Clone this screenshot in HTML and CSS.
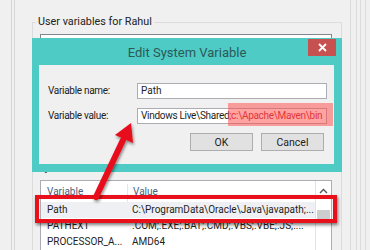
FILE: index.html
```html
<!DOCTYPE html>
<html lang="en">

<head>
    <meta charset="UTF-8">
    <title>Edit System Variable</title>
    <link rel="stylesheet" href="styles.css">
</head>

<body>
    <div class="frame">
        <div class="rail-left"></div>
        <div class="window">
            <fieldset class="group">
                <legend>User variables for Rahul</legend>
                <div class="list list-user"></div>
            </fieldset>
            <fieldset class="group group-sys">
                <legend>System variables</legend>
                <div class="list list-sys">
                    <div class="rows">
                        <div class="row head">
                            <span class="c1">Variable</span>
                            <span class="c2">Value</span>
                        </div>
                        <div class="row sel">
                            <span class="c1">Path</span>
                            <span class="c2">C:\ProgramData\Oracle\Java\javapath;...</span>
                        </div>
                        <div class="row">
                            <span class="c1">PATHEXT</span>
                            <span class="c2">.COM;.EXE;.BAT;.CMD;.VBS;.VBE;.JS;....</span>
                        </div>
                        <div class="row">
                            <span class="c1">PROCESSOR_A...</span>
                            <span class="c2">AMD64</span>
                        </div>
                    </div>
                    <div class="scroll">
                        <svg class="up" width="9" height="6" viewBox="0 0 9 6">
                            <path d="M1 5 L4.5 1.5 L8 5" fill="none" stroke="#555" stroke-width="1.4" />
                        </svg>
                        <div class="thumb"></div>
                    </div>
                </div>
            </fieldset>
        </div>
        <div class="rail-right"></div>
    </div>

    <!-- the dialog and the markup on top of the window -->
    <div class="dialog">
        <div class="titlebar">
            <span class="title">Edit System Variable</span>
            <button class="close">
                <svg width="9" height="9" viewBox="0 0 9 9">
                    <path d="M1 1 L8 8 M8 1 L1 8" stroke="#fff" stroke-width="1.8" />
                </svg>
            </button>
        </div>
        <div class="panel">
            <div class="field">
                <label>Variable name:</label>
                <div class="inpt">Path</div>
            </div>
            <div class="field">
                <label>Variable value:</label>
                <div class="inpt inpt-value">
                    <span class="txt">Vindows Live\Shared<span class="hl-text">;c:\Apache\Maven\bin</span></span>
                    <div class="hl"></div>
                </div>
            </div>
            <div class="buttons">
                <button class="but">OK</button>
                <button class="but">Cancel</button>
            </div>
        </div>
    </div>

    <div class="mark"></div>

    <svg class="arrow" width="370" height="250" viewBox="0 0 370 250">
        <defs>
            <filter id="shadow" x="-20%" y="-20%" width="140%" height="140%">
                <feDropShadow dx="1" dy="2" stdDeviation="1.5" flood-color="#000" flood-opacity="0.45" />
            </filter>
        </defs>
        <g filter="url(#shadow)">
            <line x1="96" y1="197" x2="123" y2="140" stroke="#e8101a" stroke-width="6" stroke-linecap="round" />
            <polygon points="131,123 133,143 115,135" fill="#e8101a" />
        </g>
    </svg>
</body>

</html>
```

FILE: styles.css
```css
body {
    margin: 0;
    width: 370px;
    height: 250px;
    overflow: hidden;
    position: relative;
    background-color: #f0f0f0;
    font-family: Roboto, 'Noto Sans', sans-serif;
    font-size: 10px;
    color: #1e1e1e;
}

.frame {
    display: flex;
    height: 250px;
    overflow: hidden;
}

.rail-left {
    width: 32px;
    flex-shrink: 0;
    background: linear-gradient(to right, transparent 11px, #d6d6d6 11px 12px, transparent 12px 14px, #d6d6d6 14px 15px, transparent 15px);
}

.rail-right {
    width: 28px;
    flex-shrink: 0;
    background: linear-gradient(to right, transparent 8px, #dcdcdc 8px 9px, transparent 9px 14px, #dcdcdc 14px 15px, transparent 15px 18px, #dcdcdc 18px 19px, transparent 19px 23px, #dcdcdc 23px 24px, transparent 24px);
}

.window {
    flex: 1;
    min-width: 0;
    padding-top: 15px;
}

.group {
    margin: 0;
    padding: 5px 9px 8px 7px;
    border: 1px solid #dcdcdc;
    border-radius: 0;
    min-width: 0;
}

.group legend {
    padding: 0 2px;
    margin-left: -4px;
    line-height: 14px;
    font-size: 10.8px;
    color: #222;
}

.group-sys {
    margin-top: 6px;
    height: 100px;
}

.list {
    background-color: #fff;
    border: 1px solid #828790;
}

.list-user {
    height: 110px;
}

.list-sys {
    display: flex;
    height: 80px;
    border-color: #abadb3;
    border-right-width: 0;
}

.rows {
    flex: 1;
    min-width: 0;
    padding-top: 3px;
}

.row {
    display: flex;
    height: 16px;
    line-height: 16px;
    font-size: 10px;
    color: #1e1e1e;
}

.row.head {
    height: 18px;
    color: #4c607a;
}

.row.sel {
    background-color: #eef0f3;
}

.c1 {
    width: 80px;
    padding-left: 6px;
    flex-shrink: 0;
    white-space: nowrap;
}

.head .c1 {
    border-right: 1px solid #e5e5e5;
}

.c2 {
    padding-left: 5px;
    white-space: nowrap;
    overflow: hidden;
}

.scroll {
    width: 15px;
    flex-shrink: 0;
    border-left: 1px solid #e3e3e3;
    border-right: 1px solid #abadb3;
    display: flex;
    flex-direction: column;
    align-items: center;
}

.scroll .up {
    margin-top: 7px;
}

.thumb {
    margin-top: 16px;
    width: 13px;
    height: 11px;
    background-color: #cdcdcd;
}

.dialog {
    position: absolute;
    left: 32px;
    top: 38px;
    width: 310px;
    height: 134px;
    background-color: #4fcbc6;
    display: flex;
    flex-direction: column;
}

.titlebar {
    height: 27px;
    display: flex;
    justify-content: center;
    align-items: center;
}

.title {
    font-size: 13px;
    color: #2c5856;
    margin-top: 1px;
}

.close {
    position: absolute;
    right: 6px;
    top: 1px;
    width: 28px;
    height: 17px;
    border: 0;
    padding: 0;
    background-color: #c75050;
    display: flex;
    align-items: center;
    justify-content: center;
}

.panel {
    flex: 1;
    margin: 0 8px 8px 7px;
    background-color: #f0f0f0;
    padding: 18px 7px 0 9px;
}

.field {
    display: flex;
    align-items: center;
    height: 16px;
    margin-bottom: 9px;
}

.field label {
    width: 89px;
    flex-shrink: 0;
    line-height: 16px;
    letter-spacing: -0.3px;
    color: #222;
}

.inpt {
    position: relative;
    flex: 1;
    min-width: 0;
    height: 14px;
    line-height: 14px;
    padding: 0 4px 0 3px;
    background-color: #fff;
    border: 1px solid #abadb3;
    white-space: nowrap;
}

.txt {
    display: block;
    text-align: right;
    letter-spacing: -0.3px;
}

.hl-text {
    color: #c0282a;
}

.hl {
    position: absolute;
    left: 90px;
    top: -6px;
    width: 105px;
    height: 23px;
    background-color: rgba(255, 70, 70, 0.5);
}

.buttons {
    display: flex;
    justify-content: flex-end;
    gap: 8px;
    margin-top: 3px;
    padding-right: 3px;
}

.but {
    width: 63px;
    height: 18px;
    padding: 0;
    background-color: #e1e1e1;
    border: 1px solid #adadad;
    font-family: Roboto, 'Noto Sans', sans-serif;
    font-size: 10.5px;
    color: #222;
}

.mark {
    position: absolute;
    left: 35px;
    top: 195px;
    width: 294px;
    height: 20px;
    border: 4px solid #e8101a;
    box-shadow: 1px 2px 3px rgba(0, 0, 0, 0.5);
}

.arrow {
    position: absolute;
    left: 0;
    top: 0;
    pointer-events: none;
}
```
